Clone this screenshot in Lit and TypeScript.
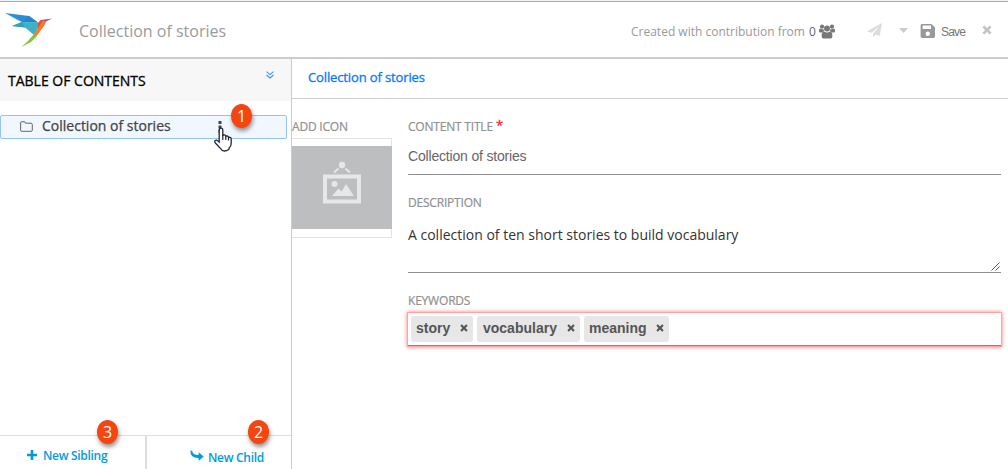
import { LitElement, html, css } from "lit";
import { customElement } from "lit/decorators.js";

const closeIcon = html`<svg class="x" viewBox="0 0 10 10"><path d="M2.3 .4 5 3.1 7.7 .4 9.6 2.3 6.9 5 9.6 7.7 7.7 9.6 5 6.9 2.3 9.6 .4 7.7 3.1 5 .4 2.3Z" fill="currentColor"/></svg>`;

@customElement("app-root")
export class AppRoot extends LitElement {
  static styles = css`
    :host { display: flex; flex-direction: column; width: 1008px; height: 469px; overflow: hidden; background: #fff; font-family: "Open Sans", sans-serif; color: #333; }
    * { box-sizing: border-box; }
    svg { display: block; flex: none; }
    .t { white-space: nowrap; display: block; }
    header { flex: none; height: 59px; border-top: 1px solid #f4f4f4; border-bottom: 2px solid #ccc; display: flex; align-items: flex-start; }
    .edge { flex: 1; height: 56px; border-top: 1px solid #aaa; display: flex; }
    .logo { margin: 10px 0 0 4px; }
    .name { margin: 18px 0 0 26px; width: 552px; font-size: 16px; line-height: 22px; color: #9b9b9b; }
    .contrib { margin: 20px 0 0 0; width: 188px; font-size: 12px; line-height: 20px; color: #999; }
    .contrib b { font-weight: 400; color: #666; margin-left: 1px; }
    .people { margin: 22px 0 0 0; }
    .plane { margin: 21px 0 0 32px; }
    .caret { margin: 26px 0 0 17px; }
    .disk { margin: 22px 0 0 12px; }
    .save { margin: 20px 0 0 6px; width: 39px; font: 12px/20px "Liberation Sans", sans-serif; color: #777; letter-spacing: -.8px; }
    .close { margin: 23px 0 0 2px; color: #c4c4c4; }
    .close .x { width: 10px; height: 10px; }
    .body { flex: 1; display: flex; min-height: 0; }
    aside { width: 292px; border-right: 1px solid #ccc; display: flex; flex-direction: column; }
    .toc { height: 42px; background: #f7f7f7; display: flex; padding: 12px 17px 0 8px; justify-content: space-between; font-size: 14px; line-height: 20px; color: #000; -webkit-text-stroke: .3px #000; }
    .row { position: relative; margin-top: 14px; width: 287px; height: 24px; border: 1px solid #8fc5f7; border-radius: 2px; background: #f0f7fe; display: flex; padding-left: 19px; }
    .folder { margin: 5px 0 0; }
    .node { margin-left: 9px; width: 175px; font-size: 14px; line-height: 20px; color: #444; -webkit-text-stroke: .25px #444; }
    .dots { margin: 4px 0 0 1px; }
    .cursor { position: absolute; left: 213px; top: 11px; }
    .badge { position: absolute; width: 21px; height: 24px; border-radius: 50%; background: #f64610; color: #fff; font: 16px/24px "Open Sans", sans-serif; text-align: center; box-shadow: 1px 3px 4px rgba(0,0,0,.42); -webkit-text-stroke: 0; letter-spacing: 0; }
    .b1 { left: 230px; top: -12px; }
    .b2 { left: 101px; top: -16px; }
    .b3 { left: 97px; top: -16px; }
    .actions { margin-top: auto; height: 34px; border-top: 1px solid #ddd; display: flex; }
    .act { position: relative; flex: 1; display: flex; font-size: 12px; line-height: 18px; font-weight: 600; color: #009cdc; letter-spacing: -.3px; }
    .act.sib { padding: 11px 0 0 27px; gap: 6px; border-right: 2px solid #ddd; flex: 0 0 147px; }
    .act.child { padding: 13px 0 0 43px; gap: 4px; }
    main { flex: 1; }
    .tab { height: 40px; border-bottom: 1px solid #ccc; padding: 8px 0 0 16px; font-size: 13px; line-height: 20px; color: #007aff; -webkit-text-stroke: .3px #007aff; letter-spacing: -.13px; }
    .form { display: flex; }
    .label { font-size: 12px; line-height: 16px; color: #909090; -webkit-text-stroke: .2px #909090; height: 16px; letter-spacing: -.2px; }
    .pic { width: 100px; padding-top: 20px; }
    .frame { margin-top: 3px; height: 100px; width: 100px; border: 1px solid #e3e3e3; border-left: 0; padding-top: 7px; }
    .frame svg { margin-right: -1px; }
    .fields { margin-left: 16px; width: 593px; padding-top: 20px; }
    .star { color: #f22; -webkit-text-stroke: .3px #f22; font-size: 13px; line-height: 10px; margin-left: 3px; vertical-align: 1px; }
    .title { height: 40px; padding-top: 11px; border-bottom: 1px solid #8f8f8f; font: 14px/20px "Liberation Sans", sans-serif; color: #666; letter-spacing: -.18px; }
    .desc { position: relative; height: 62px; padding-top: 14px; border-bottom: 1px solid #8f8f8f; font-size: 14px; line-height: 20px; color: #333; }
    .grip { position: absolute; right: 1px; bottom: 1px; }
    .gap { height: 20px; }
    .keys { margin-top: 4px; height: 33px; width: 593px; border-bottom: 1px solid #888; box-shadow: 0 0 0 1px #ffa3a3, 0 0 4px 1px #ff7777; display: flex; gap: 4px; padding: 3px; }
    .chip { height: 26px; border-radius: 3px; background: #e7e7e7; color: #555; font: bold 14px/24px "Liberation Sans", sans-serif; padding: 0 5px; display: flex; justify-content: space-between; }
    .chip .x { width: 8px; height: 8px; margin-top: 8px; }
    .k1 { width: 62px; } .k2 { width: 103px; padding-left: 6px; } .k3 { width: 85px; }
  `;

  header() {
    return html`<header><div class="edge">
      <svg class="logo" width="49" height="38" viewBox="4 12 49 38">
        <path d="M5 13 29 16 38 22.5 22 22Z" fill="#2d8dd6"/><path d="M5 13 22 22 17 20Z" fill="#55b4e5"/>
        <path d="M29 16 38 22.5 22 22Z" fill="#2485cf"/>
        <path d="M12 26 22 22 38 22.5 38 28 34 35 25 27.5Z" fill="#3bb3c4"/><path d="M12 26 22 22 25 27.5Z" fill="#35a0ae"/>
        <path d="M38 23 41 20 47 20 44 26 35 38 33 36 38 28Z" fill="#f57c24"/><path d="M38 23 41 20 43 20 38 28Z" fill="#e84b3c"/>
        <path d="M41 20 52 18.5 46 21.5Z" fill="#b54b8c"/>
        <path d="M33.5 34.5 37 36 31 42 21.5 47 28 41Z" fill="#83c441"/>
      </svg>
      <span class="t name">Collection of stories</span>
      <span class="t contrib">Created with contribution from <b>0</b></span>
      <svg class="people" width="16" height="15" viewBox="0 0 16 15" fill="#777">
        <circle cx="3" cy="2.7" r="2.1"/><circle cx="13" cy="2.7" r="2.1"/><circle cx="8" cy="4.4" r="3"/>
        <path d="M0 8V6.2Q0 4.6 1.4 4.8 3 5.5 4.4 4.9 4.6 6.4 5.3 7.2 3.8 7.4 3 8.5H1Q0 8.5 0 7.5ZM16 8V6.2Q16 4.6 14.6 4.8 13 5.5 11.6 4.9 11.4 6.4 10.7 7.2 12.2 7.4 13 8.5H15Q16 8.5 16 7.5Z"/>
        <path d="M2.6 12.2Q2.6 7.6 5 7.6 8 9.4 11 7.6 13.4 7.6 13.4 12.2 13.4 14.5 11.4 14.5H4.6Q2.6 14.5 2.6 12.2Z"/>
      </svg>
      <svg class="plane" width="15" height="15" viewBox="0 0 15 15" fill="#dcdcdc"><path d="M15 0 12.7 13 8.6 11.4 6.2 14.6V10.6L12.7 3 4.5 9.7 0 8.3Z"/></svg>
      <svg class="caret" width="9" height="5" viewBox="0 0 9 5"><path d="M0 0H9L4.5 5Z" fill="#ccc"/></svg>
      <svg class="disk" width="15" height="15" viewBox="0 0 15 15"><path fill="#999" fill-rule="evenodd" d="M2 0H11.5L15 3.5V12.6Q15 14 13.6 14H2Q.6 14 .6 12.6V1.4Q.6 0 2 0ZM2.6 1.6V5H11V1.6ZM7.8 7.6A2.2 2.2 0 1 0 7.8 12 2.2 2.2 0 1 0 7.8 7.6Z"/></svg>
      <span class="t save">Save</span><span class="close">${closeIcon}</span>
    </div></header>`;
  }

  sidebar() {
    return html`<aside>
      <div class="toc"><span class="t">TABLE OF CONTENTS</span>
        <svg width="8" height="8" viewBox="0 0 8 8" fill="none" stroke="#3595f5" stroke-width="1.1"><path d="M.5 .6 4 3.6 7.5 .6M.5 4 4 7 7.5 4"/></svg></div>
      <div class="row">
        <svg class="folder" width="13" height="12" viewBox="0 0 13 12"><path d="M.6 9.2V1.8Q.6 .7 1.7 .7H4.3Q5.2 .7 5.4 2.2H11Q12.3 2.2 12.3 3.4V9.2Q12.3 10.3 11.2 10.3H1.7Q.6 10.3 .6 9.2Z" fill="none" stroke="#666"/></svg>
        <span class="t node">Collection of stories</span>
        <svg class="dots" width="4" height="14" viewBox="0 0 4 14"><path d="M.5 1h3v3h-3ZM.5 5.5h3v3h-3ZM.5 10h3v3h-3Z" fill="#444"/></svg>
        <svg class="cursor" width="18" height="26" viewBox="0 0 18 26"><path d="M5.2 15V3.2Q5.2 1.2 7 1.2T8.8 3.2V8.3Q11.6 7.3 11.8 9.2 14.2 8.5 14.5 10.3 17.2 9.9 17.2 12.2V16.5Q17.2 19 15.3 20.7L14.8 22.5Q12.5 24 10.5 24 8 24 6.8 21.8L1.4 16Q.2 14.5 1.2 13.5 2.5 12.6 3.7 13.7Z" fill="#fff" stroke="#222638" stroke-width="1.3"/><path d="M8.8 8.3V13M11.8 9.2V13M14.5 10.3V13.5" stroke="#222638" stroke-width="1.2"/></svg>
        <span class="badge b1">1</span>
      </div>
      <div class="actions">
        <div class="act sib"><svg width="10" height="16" viewBox="0 0 10 16"><path d="M5 3v10M0 8h10" stroke="#009cdc" stroke-width="2.6"/></svg><span class="t">New Sibling</span><span class="badge b3">3</span></div>
        <div class="act child"><svg width="14" height="14" viewBox="0 0 14 14"><path d="M.3 1.8 2.2 1.8Q2.6 6.1 8.6 6.1V3.2L13.7 7.6 8.6 12V9.1Q.3 9.4 .3 1.8Z" fill="#009cdc"/></svg><span class="t">New Child</span><span class="badge b2">2</span></div>
      </div>
    </aside>`;
  }

  render() {
    const keys = ["story", "vocabulary", "meaning"];
    return html`${this.header()}
      <div class="body">${this.sidebar()}
        <main>
          <div class="tab"><span class="t">Collection of stories</span></div>
          <div class="form">
            <div class="pic"><span class="t label">ADD ICON</span>
              <div class="frame"><svg width="100" height="83" viewBox="0 0 100 83"><path fill="#bcbec0" d="M0 0H100V83H0Z"/><g fill="#e6e7e8"><circle cx="50" cy="19" r="3.2"/><path fill-rule="evenodd" d="M31 28.5H69V57.5H31ZM35 32.5V53.5H65V32.5Z"/><circle cx="42.5" cy="38" r="3"/><path d="M40 50 46.5 42.5 49.5 45.5 54 38 62 50Z"/></g><path d="M46.5 22.5 42 26.5M53.5 22.5 58 26.5" stroke="#e6e7e8" stroke-width="1.8"/></svg></div>
            </div>
            <div class="fields">
              <span class="t label">CONTENT TITLE<span class="star">*</span></span>
              <div class="title">Collection of stories</div>
              <div class="gap"></div>
              <span class="t label">DESCRIPTION</span>
              <div class="desc">A collection of ten short stories to build vocabulary
                <svg class="grip" width="9" height="9" viewBox="0 0 9 9"><path d="M.5 8.5 8.5 .5M4.5 8.5 8.5 4.5" stroke="#555"/></svg></div>
              <div class="gap"></div>
              <span class="t label">KEYWORDS</span>
              <div class="keys">${keys.map((k, i) => html`<span class="chip k${i + 1}"><span>${k}</span>${closeIcon}</span>`)}</div>
            </div>
          </div>
        </main>
      </div>`;
  }
}
